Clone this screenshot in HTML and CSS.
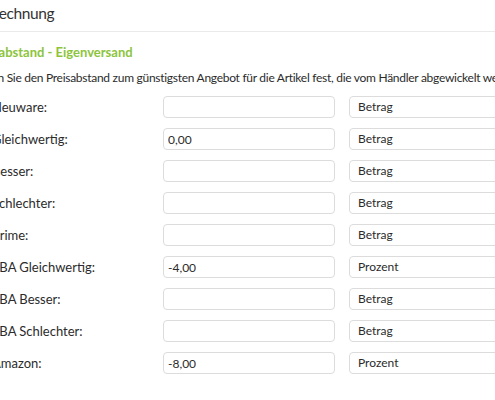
FILE: index.html
```html
<!DOCTYPE html>
<html lang="de">
<head>
<meta charset="utf-8">
<link rel="stylesheet" href="styles.css">
</head>
<body>
<div class="page">
  <h2 class="title">Rechnung</h2>
  <div class="section">
    <h3 class="section-head">Preisabstand - Eigenversand</h3>
    <p class="desc">Legen Sie den Preisabstand zum günstigsten Angebot für die Artikel fest, die vom Händler abgewickelt werden.</p>
    <div class="rows">
      <div class="row"><label class="lbl">Neuware:</label><input class="inp" type="text" value=""><div class="sel">Betrag</div></div>
      <div class="row"><label class="lbl">Gleichwertig:</label><input class="inp" type="text" value="0,00"><div class="sel">Betrag</div></div>
      <div class="row"><label class="lbl">Besser:</label><input class="inp" type="text" value=""><div class="sel">Betrag</div></div>
      <div class="row"><label class="lbl">Schlechter:</label><input class="inp" type="text" value=""><div class="sel">Betrag</div></div>
      <div class="row"><label class="lbl">Prime:</label><input class="inp" type="text" value=""><div class="sel">Betrag</div></div>
      <div class="row"><label class="lbl">FBA Gleichwertig:</label><input class="inp" type="text" value="-4,00"><div class="sel">Prozent</div></div>
      <div class="row"><label class="lbl">FBA Besser:</label><input class="inp" type="text" value=""><div class="sel">Betrag</div></div>
      <div class="row"><label class="lbl">FBA Schlechter:</label><input class="inp" type="text" value=""><div class="sel">Betrag</div></div>
      <div class="row"><label class="lbl">Amazon:</label><input class="inp" type="text" value="-8,00"><div class="sel">Prozent</div></div>
    </div>
  </div>
</div>
</body>
</html>
```
FILE: styles.css
```css
html, body {
  margin: 0;
  padding: 0;
  background: #fff;
  overflow: hidden;
}
body {
  width: 495px;
  height: 400px;
  font-family: Lato, "Liberation Sans", sans-serif;
  color: #2b2b2b;
}
.page {
  margin-left: -8px;
  width: 600px;
}
.title {
  margin: 0 0 0 -2px;
  font-size: 15.5px;
  font-weight: 400;
  letter-spacing: -0.4px;
  line-height: 20px;
  padding-top: 3px;
  height: 28px;
  border-bottom: 1px solid #eaeaea;
  color: #333;
}
.section-head {
  margin: 0 0 0 -22px;
  padding-top: 12px;
  font-size: 13px;
  font-weight: 700;
  line-height: 16px;
  color: #8cc43c;
}
.desc {
  margin: 10px 0 0 -18px;
  font-size: 12px;
  letter-spacing: -0.28px;
  line-height: 16px;
  white-space: nowrap;
}
.rows {
  margin-top: 10px;
  display: flex;
  flex-direction: column;
  gap: 10px;
}
.row {
  display: flex;
  align-items: center;
  height: 22px;
}
.lbl {
  width: 171px;
  font-size: 13px;
}
.inp {
  box-sizing: border-box;
  width: 172px;
  height: 22px;
  margin: 0;
  padding: 0 4px;
  border: 1px solid #dcdcdc;
  border-radius: 4px;
  font-family: inherit;
  font-size: 12px;
  color: #2b2b2b;
  outline: none;
}
.sel {
  box-sizing: border-box;
  margin-left: 14px;
  width: 200px;
  height: 22px;
  padding: 0 8px;
  border: 1px solid #dcdcdc;
  border-radius: 4px;
  font-size: 12px;
  line-height: 20px;
}
```
